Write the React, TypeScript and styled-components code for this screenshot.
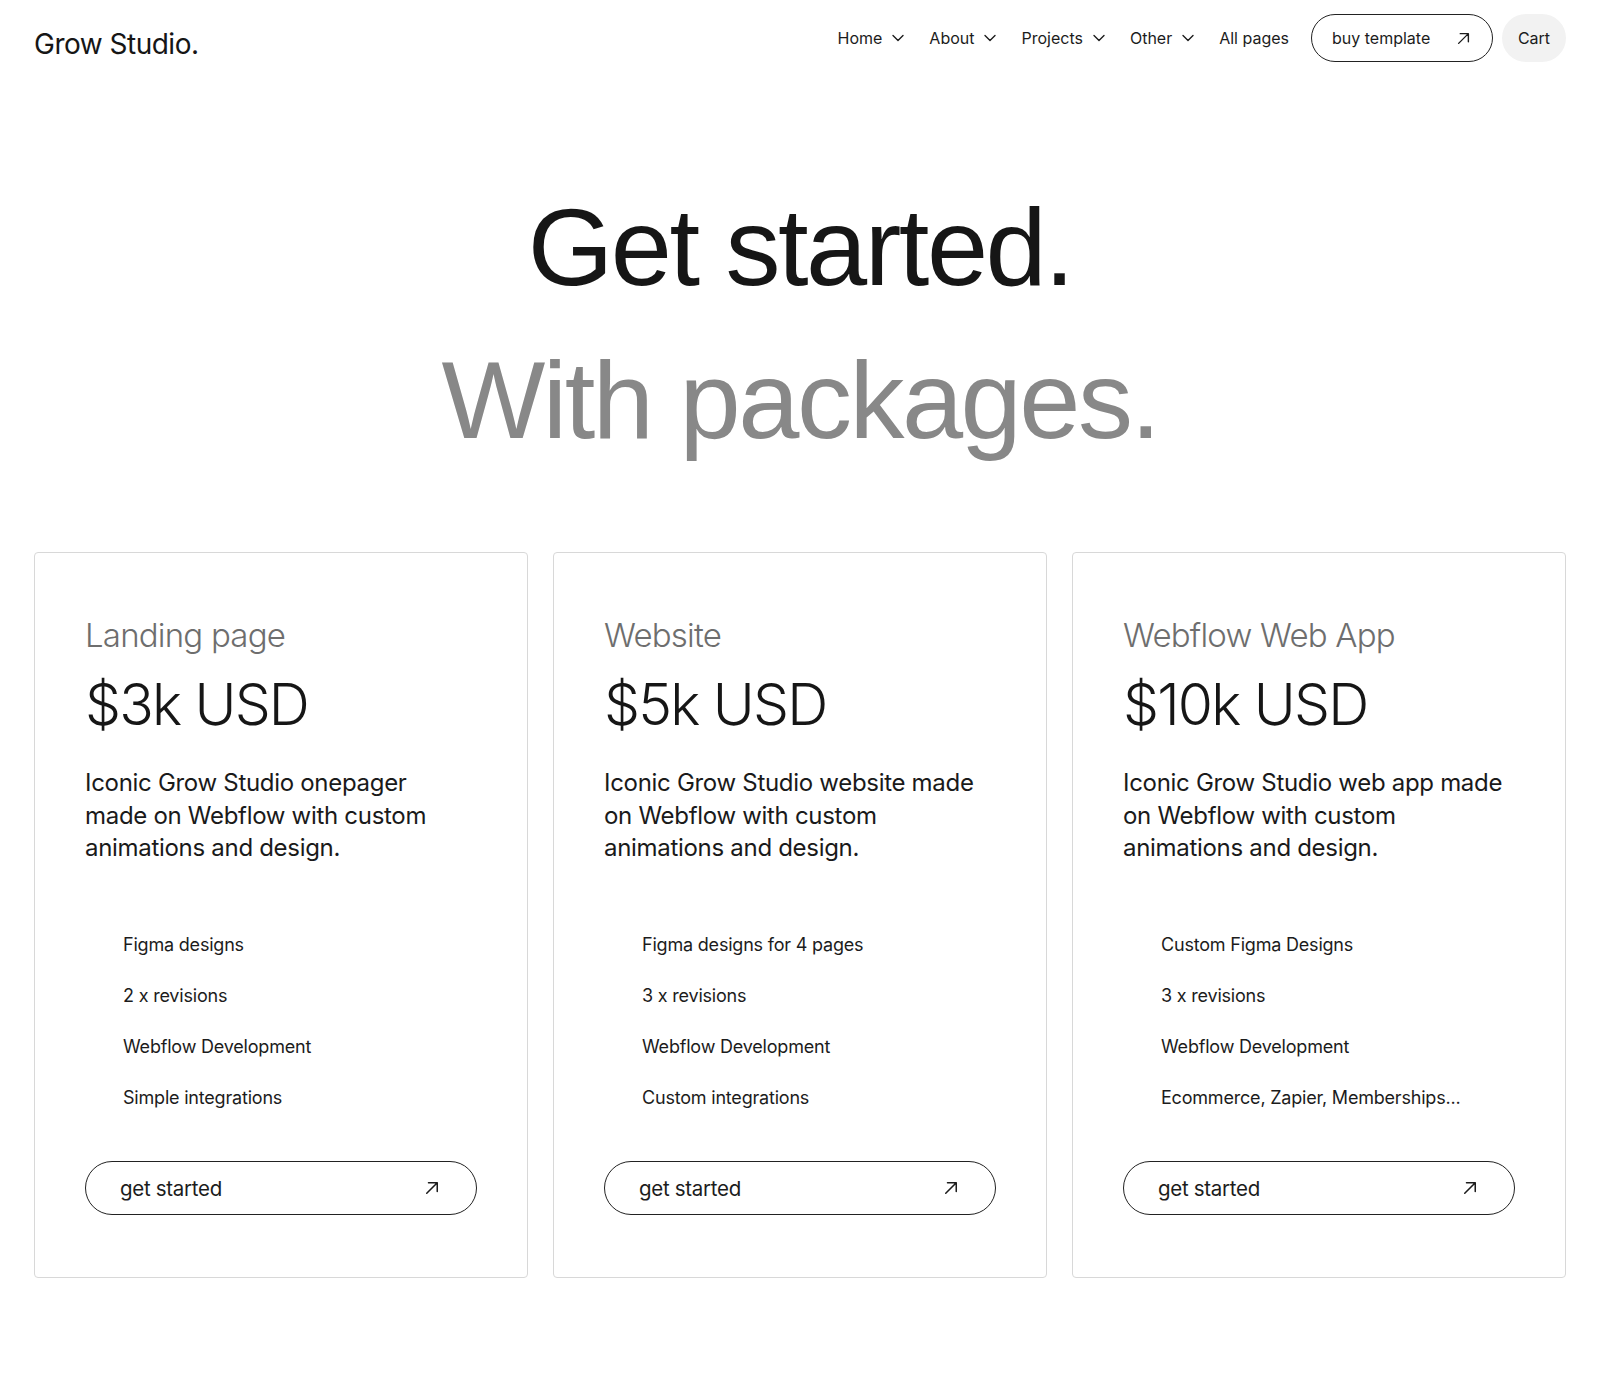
import React from "react";
import styled, { createGlobalStyle } from "styled-components";

const GlobalStyle = createGlobalStyle`
  body {
    margin: 0;
    background: #ffffff;
    font-family: Inter, "Liberation Sans", sans-serif;
    color: #161616;
  }
  * { box-sizing: border-box; }
`;

const Page = styled.div`
  width: 1600px;
  min-height: 1400px;
  padding: 0 34px;
`;

const Header = styled.header`
  display: flex;
  justify-content: space-between;
  align-items: flex-start;
  padding-top: 14px;
`;

const Logo = styled.a`
  font-size: 28px;
  letter-spacing: -0.5px;
  color: #161616;
  margin-top: 13px;
  text-decoration: none;
`;

const Nav = styled.nav`
  display: flex;
  align-items: center;
`;

const NavLink = styled.a<{ $last?: boolean }>`
  display: flex;
  align-items: center;
  gap: 10px;
  font-size: 16px;
  color: #1c1c1c;
  margin-right: ${(p) => (p.$last ? "22px" : "25px")};
  text-decoration: none;
`;

const OutlineButton = styled.a`
  display: flex;
  align-items: center;
  justify-content: space-between;
  height: 48px;
  border: 1px solid #222;
  border-radius: 999px;
  color: #1c1c1c;
  text-decoration: none;
`;

const NavButton = styled(OutlineButton)`
  width: 182px;
  padding: 0 22px 0 20px;
  font-size: 16px;
`;

const CartButton = styled.a`
  margin-left: 9px;
  height: 48px;
  width: 64px;
  border-radius: 999px;
  background: #f2f2f2;
  display: flex;
  align-items: center;
  justify-content: center;
  font-size: 16px;
  color: #1c1c1c;
`;

const Hero = styled.section`
  text-align: center;
  padding-top: 108px;
  font-family: "Liberation Sans", Arial, sans-serif;
  font-size: 110px;
  line-height: 153px;
  letter-spacing: -2.5px;
`;

const HeroLine = styled.h1<{ $muted?: boolean }>`
  margin: 0;
  font-weight: 400;
  font-size: inherit;
  color: ${(p) => (p.$muted ? "#888888" : "#161616")};
`;

const Grid = styled.section`
  display: grid;
  grid-template-columns: repeat(3, 1fr);
  gap: 25px;
  margin-top: 76px;
`;

const Card = styled.div`
  border: 1px solid #d8d8d8;
  border-radius: 4px;
  padding: 60px 50px 62px;
  display: flex;
  flex-direction: column;
`;

const Kind = styled.div`
  font-size: 33px;
  font-weight: 300;
  color: #6e6e6e;
  letter-spacing: -0.8px;
  line-height: 44px;
`;

const Price = styled.div`
  font-size: 57px;
  font-weight: 300;
  letter-spacing: -1.8px;
  line-height: 70px;
  margin-top: 13px;
  color: #161616;
`;

const Description = styled.p`
  max-width: 385px;
  font-size: 24px;
  line-height: 32.5px;
  letter-spacing: -0.3px;
  margin: 27px 0 0;
  color: #1a1a1a;
`;

const Features = styled.ul`
  list-style: none;
  margin: 68px 0 0;
  padding: 0 0 0 38px;
  display: flex;
  flex-direction: column;
  gap: 26.3px;
`;

const Feature = styled.li`
  font-size: 18px;
  line-height: 24.7px;
  letter-spacing: -0.2px;
  color: #1c1c1c;
`;

const CardButton = styled(OutlineButton)`
  margin-top: 51px;
  height: 54px;
  padding: 0 37px 0 34px;
  font-size: 20.5px;
  letter-spacing: -0.3px;
`;

const Arrow = ({ size = 13 }: { size?: number }) => (
  <svg width={size} height={size} viewBox="0 0 12 12" fill="none" stroke="#1c1c1c" strokeWidth="1.3" strokeLinecap="round" strokeLinejoin="round">
    <path d="M1.5 10.5 L10.5 1.5 M3 1.5 H10.5 V9" />
  </svg>
);

const Chevron = () => (
  <svg width="12" height="8" viewBox="0 0 12 8" fill="none" stroke="#1c1c1c" strokeWidth="1.4" strokeLinecap="round" strokeLinejoin="round">
    <path d="M1 1.5 L6 6.5 L11 1.5" />
  </svg>
);

const plans = [
  {
    kind: "Landing page",
    price: "$3k USD",
    text: "Iconic Grow Studio onepager made on Webflow with custom animations and design.",
    features: ["Figma designs", "2 x revisions", "Webflow Development", "Simple integrations"],
  },
  {
    kind: "Website",
    price: "$5k USD",
    text: "Iconic Grow Studio website made on Webflow with custom animations and design.",
    features: ["Figma designs for 4 pages", "3 x revisions", "Webflow Development", "Custom integrations"],
  },
  {
    kind: "Webflow Web App",
    price: "$10k USD",
    text: "Iconic Grow Studio web app made on Webflow with custom animations and design.",
    features: ["Custom Figma Designs", "3 x revisions", "Webflow Development", "Ecommerce, Zapier, Memberships..."],
  },
];

export default function App() {
  return (
    <Page>
      <GlobalStyle />
      <Header>
        <Logo>Grow Studio.</Logo>
        <Nav>
          <NavLink>Home <Chevron /></NavLink>
          <NavLink>About <Chevron /></NavLink>
          <NavLink>Projects <Chevron /></NavLink>
          <NavLink>Other <Chevron /></NavLink>
          <NavLink $last>All pages</NavLink>
          <NavButton>buy template <Arrow /></NavButton>
          <CartButton>Cart</CartButton>
        </Nav>
      </Header>

      <Hero>
        <HeroLine>Get started.</HeroLine>
        <HeroLine $muted>With packages.</HeroLine>
      </Hero>

      <Grid>
        {plans.map((p) => (
          <Card key={p.kind}>
            <Kind>{p.kind}</Kind>
            <Price>{p.price}</Price>
            <Description>{p.text}</Description>
            <Features>
              {p.features.map((f) => (
                <Feature key={f}>{f}</Feature>
              ))}
            </Features>
            <CardButton>get started <Arrow size={14} /></CardButton>
          </Card>
        ))}
      </Grid>
    </Page>
  );
}
